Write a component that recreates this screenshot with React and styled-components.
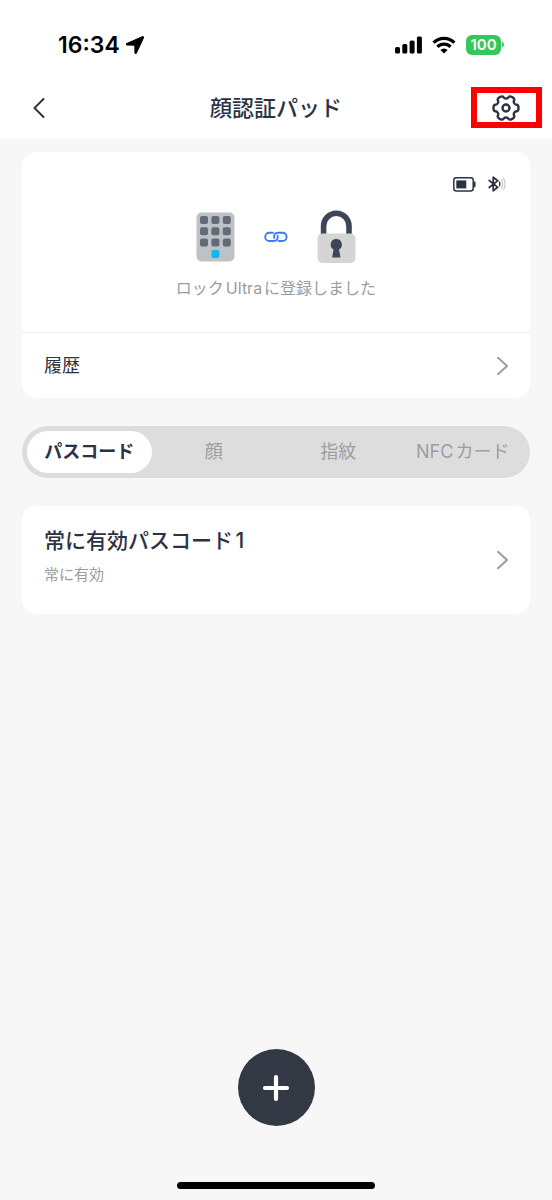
import React, { useState } from "react";
import styled, { createGlobalStyle } from "styled-components";

const ink = "#2b3242";
const muted = "#9a9da2";

const GlobalStyle = createGlobalStyle`
  * { box-sizing: border-box; }
  body {
    margin: 0;
    background: #f7f7f7;
    color: ${ink};
    font-family: Inter, "Noto Sans CJK JP", sans-serif;
    text-autospace: normal;
  }
  button { font: inherit; color: inherit; border: 0; padding: 0; background: none; cursor: pointer; }
  svg { display: block; flex: none; }
`;

const Screen = styled.div`
  min-height: 100vh;
  display: flex;
  flex-direction: column;
`;

const StatusBar = styled.div`
  height: 77px;
  padding: 12px 48px 0 58px;
  display: flex;
  align-items: center;
  justify-content: space-between;
  background: #fff;
  color: #000;
`;

const StatusGroup = styled.div`
  display: flex;
  align-items: center;
  gap: ${(p) => p.$gap}px;
`;

const Clock = styled.time`
  font-size: 23px;
  line-height: 28px;
  font-weight: 600;
`;

const Battery = styled.div`
  display: flex;
  align-items: center;
  gap: 1px;
`;

const BatteryLevel = styled.span`
  width: 35px;
  height: 20px;
  border-radius: 6px;
  background: #34c759;
  color: #fff;
  font-size: 15px;
  line-height: 20px;
  font-weight: 600;
  text-align: center;
`;

const Header = styled.header`
  height: 61px;
  padding: 0 10px 0 22px;
  display: grid;
  grid-template-columns: 59px 1fr 71px;
  align-items: center;
  background: #fff;
`;

const Title = styled.h1`
  margin: 0;
  font-size: 22px;
  line-height: 32px;
  font-weight: 500;
  text-align: center;
`;

const BackButton = styled.button`
  width: 34px;
  height: 40px;
  display: grid;
  place-items: center;
`;

const SettingsButton = styled.button`
  && { border: 6px solid #f00; }
  width: 71px;
  height: 41px;
  display: grid;
  place-items: center;
`;

const Content = styled.main`
  flex: 1;
  padding: 14px 22px 0;
  display: flex;
  flex-direction: column;
  gap: 28px;
`;

const Card = styled.section`
  background: #fff;
  border-radius: 14px;
  overflow: hidden;
`;

const DeviceSummary = styled.div`
  height: 181px;
  padding-top: 24px;
  display: flex;
  flex-direction: column;
  align-items: center;
  border-bottom: 1px solid #f0f0f0;
`;

const DeviceStatus = styled.div`
  align-self: flex-end;
  padding-right: 24px;
  display: flex;
  align-items: center;
  gap: 12px;
`;

const Pairing = styled.div`
  margin-top: 18px;
  display: flex;
  align-items: center;
  gap: 29px;
`;

const PairingText = styled.p`
  margin: 12px 0 0;
  font-size: 16px;
  line-height: 24px;
  color: ${muted};
`;

const RowButton = styled.button`
  width: 100%;
  min-height: ${(p) => p.$height}px;
  padding: 0 22px;
  display: flex;
  align-items: center;
  justify-content: space-between;
  text-align: left;
`;

const RowLabel = styled.span`
  font-size: 18px;
  line-height: 28px;
`;

const PasscodeText = styled.span`
  display: flex;
  flex-direction: column;
  gap: 8px;
  padding-bottom: 8px;
`;

const PasscodeName = styled.span`
  font-size: 21px;
  line-height: 30px;
  font-weight: 500;
`;

const PasscodeNote = styled.span`
  font-size: 15px;
  line-height: 22px;
  color: ${muted};
`;

const Tabs = styled.div`
  height: 52px;
  padding: 5px;
  display: grid;
  grid-template-columns: repeat(4, 1fr);
  border-radius: 26px;
  background: #dddddd;
`;

const Tab = styled.button`
  && {
    border-radius: 21px;
    background: ${(p) => (p["aria-selected"] ? "#fff" : "transparent")};
    color: ${(p) => (p["aria-selected"] ? ink : muted)};
    font-size: 18px;
    line-height: 28px;
    font-weight: ${(p) => (p["aria-selected"] ? 700 : 400)};
    white-space: nowrap;
  }
`;

const Footer = styled.footer`
  display: flex;
  flex-direction: column;
  align-items: center;
  gap: 56px;
  padding-bottom: 11px;
`;

const AddButton = styled.button`
  && { background: #333845; }
  width: 77px;
  height: 77px;
  border-radius: 50%;
  display: grid;
  place-items: center;
`;

const HomeIndicator = styled.div`
  width: 198px;
  height: 7px;
  border-radius: 4px;
  background: #000;
`;

const LocationIcon = () => (
  <svg width="20" height="20" viewBox="0 0 20 20" aria-hidden="true">
    <path d="M17.4 1.8 2 8.6c-.8.4-.6 1.3.3 1.3l7.1.2c.3 0 .5.2.5.5l.1 7c0 .9 1 1.1 1.4.2l7-15c.3-.8-.3-1.3-1-1Z" fill="#000" stroke="#000" strokeWidth="1.2" strokeLinejoin="round" />
  </svg>
);

const SignalIcon = () => (
  <svg width="27" height="18" viewBox="0 0 27 18" aria-hidden="true">
    <rect x="0" y="11" width="5" height="6.5" rx="1.5" />
    <rect x="7.3" y="8" width="5" height="9.5" rx="1.5" />
    <rect x="14.6" y="4.4" width="5" height="13.1" rx="1.5" />
    <rect x="21.9" y="0.5" width="5" height="17" rx="1.5" />
  </svg>
);

const WifiIcon = () => (
  <svg width="24" height="18" viewBox="0 0 24 18" fill="none" stroke="#000" strokeWidth="3.2" aria-hidden="true">
    <path d="M1.6 6.6a14.8 14.8 0 0 1 20.8 0" />
    <path d="M5.4 10.8a9.4 9.4 0 0 1 13.2 0" />
    <path d="M12 17.6 8.4 14a5 5 0 0 1 7.2 0Z" fill="#000" stroke="none" />
  </svg>
);

const BatteryTip = () => (
  <svg width="2" height="7" viewBox="0 0 2 7" aria-hidden="true">
    <path d="M0 0.5Q2 1.5 2 3.5T0 6.5Z" fill="#34c759" />
  </svg>
);

const BackIcon = () => (
  <svg width="12" height="20" viewBox="0 0 12 20" fill="none" stroke={ink} strokeWidth="2" strokeLinecap="round" strokeLinejoin="round" aria-hidden="true">
    <path d="M10.5 1 1.5 10l9 9" />
  </svg>
);

const Chevron = () => (
  <svg width="12" height="20" viewBox="0 0 12 20" fill="none" stroke={muted} strokeWidth="2" strokeLinecap="round" strokeLinejoin="round" aria-hidden="true">
    <path d="M2 1.8 11 10l-9 8.200" />
  </svg>
);

const GearIcon = () => (
  <svg width="30" height="28" viewBox="-14 -14 30 28" fill="none" stroke={ink} strokeWidth="2.4" strokeLinejoin="round" aria-hidden="true">
    <path d={gearOutline()} />
    <circle r="3.5" />
  </svg>
);

// Six rounded teeth: each contributes two tip corners and two valley corners.
function gearOutline() {
  const corners = [];
  for (let tooth = 0; tooth < 6; tooth += 1) {
    [[-14, 12.9], [14, 12.9], [20, 9.6], [40, 9.6]].forEach(([offset, radius]) => {
      const angle = ((tooth * 60 + offset) * Math.PI) / 180;
      corners.push([radius * Math.cos(angle), radius * Math.sin(angle)]);
    });
  }
  const middle = (a, b) => [(a[0] + b[0]) / 2, (a[1] + b[1]) / 2];
  const start = middle(corners[corners.length - 1], corners[0]);
  const curves = corners.map((corner, i) => {
    const end = middle(corner, corners[(i + 1) % corners.length]);
    return `Q${corner.join(" ")} ${end.join(" ")}`;
  });
  return `M${start.join(" ")}${curves.join("")}Z`;
}

const DeviceBatteryIcon = () => (
  <svg width="23" height="15" viewBox="0 0 23 15" aria-hidden="true">
    <rect x="0.8" y="0.8" width="19.4" height="13.2" rx="2.4" fill="none" stroke={ink} strokeWidth="1.5" />
    <rect x="3.3" y="3.4" width="10" height="8" fill={ink} />
    <path d="M20.5 4.5h1q1 0 1 1v3.8q0 1-1 1h-1Z" fill={ink} />
  </svg>
);

const BluetoothIcon = () => (
  <svg width="18" height="16" viewBox="0 0 18 16" fill="none" strokeLinecap="round" aria-hidden="true">
    <path d="m1.2 4.5 8.6 6.8-4.6 3.5V1.2l4.6 3.5-8.6 6.8" stroke={ink} strokeWidth="1.7" strokeLinejoin="round" />
    <path d="M11.500 6.200q.8 1.800 0 3.600" stroke={ink} strokeWidth="1.4" />
    <path d="M13.500 4q2 4 0 8M15.600 2.600q2.800 5.400 0 10.800" stroke="#c6c8cc" strokeWidth="1.2" />
  </svg>
);

const KeypadIcon = () => (
  <svg width="39" height="50" viewBox="0 0 39 50" aria-hidden="true">
    <rect x="0.5" y="0.5" width="38" height="49" rx="5" fill="#bdc2c7" />
    {[4, 15.3, 26.6].map((y) =>
      [4, 15.4, 26.8].map((x) => <rect key={`${x}-${y}`} x={x} y={y} width="8" height="8" rx="2" fill="#646b77" />)
    )}
    <rect x="15.4" y="38" width="8" height="8" rx="2" fill="#12b7f0" />
  </svg>
);

const LinkIcon = () => (
  <svg width="24" height="12" viewBox="0 0 24 12" fill="none" stroke="#3f7bf0" strokeWidth="1.9" strokeLinecap="round" aria-hidden="true">
    <path d="M10.2 7C9.600 4 10.800 1.800 14 1.800h4.500a4.100 4.100 0 0 1 0 8.200H14.800" />
    <path d="M13.600 4.800C14.200 8 13 10 9.800 10H5.300a4.100 4.100 0 0 1 0-8.200h3.700" />
  </svg>
);

const PadlockIcon = () => (
  <svg width="39" height="54" viewBox="0 0 39 54" aria-hidden="true">
    <path d="M6.600 25V16a12.700 12.700 0 0 1 25.400 0v9" fill="none" stroke="#3d4657" strokeWidth="5.600" />
    <rect x="0.500" y="23.500" width="38" height="29.500" rx="5" fill="#d5d5d5" />
    <path d="M19.300 29a5.600 5.600 0 0 1 2.700 10.500l1.500 7.900h-8.400l1.500-7.900A5.600 5.600 0 0 1 19.300 29Z" fill="#3d4657" />
  </svg>
);

const PlusIcon = () => (
  <svg width="28" height="28" viewBox="0 0 28 28" stroke="#fff" strokeWidth="4.200" strokeLinecap="round" aria-hidden="true">
    <path d="M14 3v22M3 14h22" />
  </svg>
);

const tabNames = ["パスコード", "顔", "指紋", "NFCカード"];

export default function App() {
  const [active, setActive] = useState(0);

  return (
    <Screen>
      <GlobalStyle />
      <StatusBar>
        <StatusGroup $gap={5}>
          <Clock>16:34</Clock>
          <LocationIcon />
        </StatusGroup>
        <StatusGroup $gap={10}>
          <SignalIcon />
          <WifiIcon />
          <Battery>
            <BatteryLevel>100</BatteryLevel>
            <BatteryTip />
          </Battery>
        </StatusGroup>
      </StatusBar>
      <Header>
        <BackButton aria-label="戻る">
          <BackIcon />
        </BackButton>
        <Title>顔認証パッド</Title>
        <SettingsButton aria-label="設定">
          <GearIcon />
        </SettingsButton>
      </Header>
      <Content>
        <Card>
          <DeviceSummary>
            <DeviceStatus>
              <DeviceBatteryIcon />
              <BluetoothIcon />
            </DeviceStatus>
            <Pairing>
              <KeypadIcon />
              <LinkIcon />
              <PadlockIcon />
            </Pairing>
            <PairingText>ロックUltraに登録しました</PairingText>
          </DeviceSummary>
          <RowButton $height={65}>
            <RowLabel>履歴</RowLabel>
            <Chevron />
          </RowButton>
        </Card>
        <Tabs role="tablist">
          {tabNames.map((name, i) => (
            <Tab key={name} role="tab" aria-selected={i === active} onClick={() => setActive(i)}>
              {name}
            </Tab>
          ))}
        </Tabs>
        <Card>
          <RowButton $height={108}>
            <PasscodeText>
              <PasscodeName>常に有効パスコード1</PasscodeName>
              <PasscodeNote>常に有効</PasscodeNote>
            </PasscodeText>
            <Chevron />
          </RowButton>
        </Card>
      </Content>
      <Footer>
        <AddButton aria-label="追加">
          <PlusIcon />
        </AddButton>
        <HomeIndicator />
      </Footer>
    </Screen>
  );
}
